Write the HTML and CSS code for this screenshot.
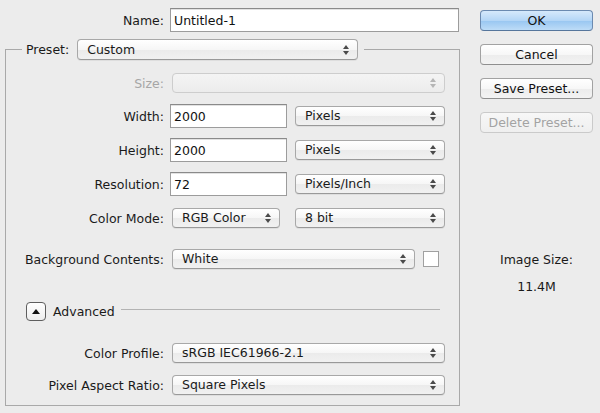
FILE: index.html
```html
<!DOCTYPE html>
<html lang="en">
<head>
  <meta charset="UTF-8">
  <title>New</title>
  <link rel="stylesheet" href="styles.css">
</head>
<body>

  <div class="dialog">
    <div class="main">
      <div class="row name-row">
        <label class="label">Name:</label>
        <input class="field name-field" type="text" value="Untitled-1">
      </div>

      <fieldset class="group">
        <legend class="preset">
          <span>Preset:</span>
          <div class="popup preset-popup">Custom</div>
        </legend>

        <div class="row first">
          <span class="label disabled">Size:</span>
          <div class="popup off wide"></div>
        </div>
        <div class="row second">
          <span class="label">Width:</span>
          <input class="field num" type="text" value="2000">
          <div class="popup unit">Pixels</div>
        </div>
        <div class="row">
          <span class="label">Height:</span>
          <input class="field num" type="text" value="2000">
          <div class="popup unit">Pixels</div>
        </div>
        <div class="row">
          <span class="label">Resolution:</span>
          <input class="field num" type="text" value="72">
          <div class="popup unit">Pixels/Inch</div>
        </div>
        <div class="row">
          <span class="label">Color Mode:</span>
          <div class="popup mode">RGB Color</div>
          <div class="popup bits">8 bit</div>
        </div>
        <div class="row spaced">
          <span class="label">Background Contents:</span>
          <div class="popup bg">White</div>
          <span class="swatch"></span>
        </div>

        <div class="advanced">
          <button class="disclose"></button>
          <span>Advanced</span>
          <span class="rule"></span>
        </div>

        <div class="row">
          <span class="label">Color Profile:</span>
          <div class="popup wide">sRGB IEC61966-2.1</div>
        </div>
        <div class="row tight">
          <span class="label">Pixel Aspect Ratio:</span>
          <div class="popup wide">Square Pixels</div>
        </div>
      </fieldset>
    </div>

    <div class="side">
      <button class="btn default">OK</button>
      <button class="btn">Cancel</button>
      <button class="btn">Save Preset...</button>
      <button class="btn" disabled>Delete Preset...</button>

      <div class="image-size">
        <div>Image Size:</div>
        <div class="size-value">11.4M</div>
      </div>
    </div>
  </div>

</body>
</html>
```

FILE: styles.css
```css
body {
  margin: 0;
  background-color: #ececec;
  font-family: 'DejaVu Sans', sans-serif;
  font-size: 12.5px;
  color: #1a1a1a;
}

.dialog {
  display: flex;
}

.main {
  width: 455px;
  padding-left: 5px;
}

.row {
  display: flex;
  align-items: center;
  height: 24px;
  margin-top: 10px;
}

.label {
  width: 158px;
  text-align: right;
  margin-right: 6px;
  flex-shrink: 0;
}

.label.disabled {
  color: #a6a6a6;
}

.name-row {
  margin-top: 8px;
  margin-bottom: 7px;
}

.name-row .label {
  width: 159px;
}

.field {
  box-sizing: border-box;
  height: 24px;
  border: 1px solid #9c9c9c;
  border-top-color: #8a8a8a;
  background: #fff;
  font-family: inherit;
  font-size: 12.5px;
  color: #111;
  padding: 0 3px;
  margin: 0;
  box-shadow: inset 0 1px 0 #e2e2e2;
}

.name-field {
  width: 289px;
}

.num {
  width: 117px;
}

/* aqua style popup buttons */
.popup {
  position: relative;
  box-sizing: border-box;
  height: 20px;
  line-height: 18px;
  padding-left: 9px;
  margin-left: 2px;
  border: 1px solid #a8a8a8;
  border-bottom-color: #999;
  border-radius: 4px;
  background: linear-gradient(#fff, #f6f6f6 50%, #ebebeb 51%, #f1f1f1);
  box-shadow: 0 1px 0 rgba(0, 0, 0, 0.06);
}

.popup::before,
.popup::after {
  content: '';
  position: absolute;
  right: 8px;
  border-left: 3px solid transparent;
  border-right: 3px solid transparent;
}

.popup::before {
  top: 4px;
  border-bottom: 4px solid #4a4a4a;
}

.popup::after {
  top: 10px;
  border-top: 4px solid #4a4a4a;
}

.popup.off {
  border-color: #cdcdcd;
  background: linear-gradient(#f4f4f4, #ececec);
  box-shadow: none;
}

.popup.off::before {
  border-bottom-color: #b5b5b5;
}

.popup.off::after {
  border-top-color: #b5b5b5;
}

.wide {
  width: 273px;
}

.unit {
  width: 150px;
  margin-left: 8px;
}

.mode {
  width: 108px;
}

.bits {
  width: 150px;
  margin-left: 15px;
}

.bg {
  width: 243px;
}

.swatch {
  width: 14px;
  height: 14px;
  margin-left: 8px;
  border: 1px solid #a0a0a0;
  background: #fff;
}

.group {
  margin: 0;
  padding: 0 0 8px;
  border: 1px solid #a9a9a9;
  min-width: 0;
}

.preset {
  display: flex;
  align-items: center;
  margin-left: 16px;
  padding: 0 6px 0 4px;
}

.preset span {
  margin-right: 6px;
}

.preset-popup {
  width: 281px;
  height: 21px;
  line-height: 19px;
}

.preset-popup::before {
  top: 5px;
}

.preset-popup::after {
  top: 11px;
}

.row.first {
  margin-top: 11px;
}

.row.second {
  margin-top: 9px;
}

.row.spaced {
  margin-top: 17px;
}

.row.tight {
  margin-top: 8px;
}

.advanced {
  display: flex;
  align-items: center;
  height: 24px;
  margin: 28px 0 18px 20px;
}

.disclose {
  position: relative;
  width: 20px;
  height: 19px;
  margin-right: 7px;
  padding: 0;
  border: 1px solid #5e5e5e;
  border-radius: 4px;
  background: linear-gradient(#fff, #ededed);
}

.disclose::after {
  content: '';
  position: absolute;
  left: 5px;
  top: 6px;
  border-left: 4px solid transparent;
  border-right: 4px solid transparent;
  border-bottom: 5px solid #111;
}

.rule {
  flex: 1;
  height: 1px;
  margin: 0 19px 3px 6px;
  background: #b3b3b3;
}

.side {
  width: 113px;
  margin-left: 20px;
  padding-top: 10px;
  display: flex;
  flex-direction: column;
}

.btn {
  height: 21px;
  margin-bottom: 13px;
  padding: 0;
  border: 1px solid #a2a2a2;
  border-bottom-color: #8f8f8f;
  border-radius: 4px;
  background: linear-gradient(#fff, #f7f7f7 50%, #ececec 51%, #f3f3f3);
  font-family: inherit;
  font-size: 12.5px;
  color: #111;
}

.btn.default {
  border-color: #6b8ab0;
  border-bottom-color: #56769c;
  background: linear-gradient(#d6e9fb, #b4d6f6 50%, #98c6f1 51%, #bddcf7);
}

.btn:disabled {
  color: #a3a3a3;
  border-color: #cacaca;
  background: linear-gradient(#f7f7f7, #efefef);
}

.image-size {
  margin-top: 106px;
  text-align: center;
  line-height: 16px;
}

.size-value {
  margin-top: 11px;
}
```
